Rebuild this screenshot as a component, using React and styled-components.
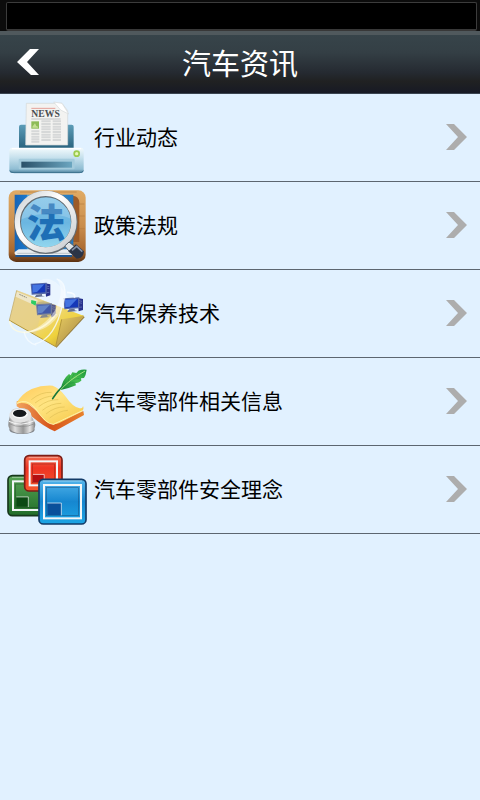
import React from "react";
import styled, { createGlobalStyle } from "styled-components";

const PrinterIcon = () => (
  <Icon viewBox="0 0 270 261" aria-hidden="true">
    <defs>
      <linearGradient id="tray" x1="0" y1="0" x2="0" y2="1">
        <stop offset="0" stopColor="#5d9db8" />
        <stop offset="1" stopColor="#28617c" />
      </linearGradient>
      <linearGradient id="printer" x1="0" y1="0" x2="0" y2="1">
        <stop offset="0" stopColor="#f4fbfd" />
        <stop offset="0.4" stopColor="#c5e0ec" />
        <stop offset="0.85" stopColor="#8fbdd3" />
        <stop offset="1" stopColor="#4d7f9a" />
      </linearGradient>
      <linearGradient id="slot" x1="0" y1="0" x2="1" y2="0">
        <stop offset="0" stopColor="#2a5068" />
        <stop offset="1" stopColor="#6ba6c0" />
      </linearGradient>
    </defs>
    <rect x="57" y="92" width="164" height="74" rx="6" fill="url(#tray)" />
    <path d="M79 28H186L203 50V153H77Z" fill="#f3f3f1" stroke="#d2d6d8" strokeWidth="2" />
    <path d="M161 24L186 28L206 60L182 48Z" fill="#fff" stroke="#d5d9da" strokeWidth="2" />
    <path d="M94 43H166" stroke="#e4a098" strokeWidth="3" />
    <text x="94" y="69" fontSize="29" fontWeight="bold" fontFamily="'Liberation Serif', serif" fill="#4a4e50">
      NEWS
    </text>
    <path d="M94 75H182" stroke="#a9adaf" strokeWidth="2" />
    <path
      d="M94 112H118M94 120H118M94 128H118M94 136H118M94 143H118M124 82H152M124 90H152M124 98H152M124 106H152M124 114H152M124 122H152M124 130H152M124 138H152M158 82H183M158 90H183M158 98H183M158 106H183M158 114H183M158 122H183M158 130H183M158 138H183"
      stroke="#d6d8d8"
      strokeWidth="6"
    />
    <rect x="94" y="82" width="23" height="22" fill="#8dbb58" />
    <path d="M97 98L105 88L109 96L114 98V101H97Z" fill="#c4df94" />
    <rect x="28" y="161" width="223" height="76" rx="9" fill="url(#printer)" />
    <path d="M36 164H243" stroke="#fff" strokeWidth="4" />
    <path d="M30 230Q32 236 42 236H238Q248 236 250 230" fill="none" stroke="#3e7390" strokeWidth="3" />
    <rect x="56" y="194" width="168" height="32" rx="4" fill="#a4cbdc" />
    <rect x="64" y="203" width="152" height="18" fill="url(#slot)" />
    <circle cx="230" cy="179" r="10" fill="#9ccc4e" />
    <circle cx="230" cy="179" r="5" fill="#e7f7b8" />
  </Icon>
);

const LawIcon = () => (
  <Icon viewBox="0 0 270 261" aria-hidden="true">
    <defs>
      <linearGradient id="wood" x1="0" y1="0" x2="0" y2="1">
        <stop offset="0" stopColor="#e0ab65" />
        <stop offset="0.5" stopColor="#c98d4c" />
        <stop offset="0.85" stopColor="#a8682f" />
        <stop offset="1" stopColor="#5b3213" />
      </linearGradient>
      <linearGradient id="book" x1="0" y1="0" x2="1" y2="0">
        <stop offset="0" stopColor="#1764b5" />
        <stop offset="0.2" stopColor="#1b78cb" />
        <stop offset="0.22" stopColor="#4aa5df" />
        <stop offset="1" stopColor="#2377bd" />
      </linearGradient>
      <linearGradient id="lens" x1="0" y1="0" x2="0" y2="1">
        <stop offset="0" stopColor="#7fc3e8" />
        <stop offset="0.5" stopColor="#6bb6e1" />
        <stop offset="1" stopColor="#96daf0" />
      </linearGradient>
      <linearGradient id="ring" x1="0" y1="0" x2="1" y2="1">
        <stop offset="0" stopColor="#c9ced1" />
        <stop offset="0.4" stopColor="#ffffff" />
        <stop offset="1" stopColor="#c5c9cc" />
      </linearGradient>
    </defs>
    <rect x="26" y="25" width="231" height="215" rx="22" fill="url(#wood)" />
    <path d="M232 66H253M232 102H254M232 140H254M232 174H254M60 30H230" stroke="#b57b3f" strokeWidth="2" />
    <path d="M210 42Q236 38 238 62V180H214Z" fill="#9c5b27" />
    <path d="M44 38H220V210H44Z" fill="url(#book)" />
    <path d="M44 210L56 202H218V220H48Q42 218 44 210Z" fill="#e8edf0" />
    <path d="M46 222H216" stroke="#1d5794" strokeWidth="6" />
    <path d="M52 214H214" stroke="#a3adb5" strokeWidth="2" />
    <circle cx="138" cy="122" r="82" fill="url(#lens)" />
    <text
      x="80"
      y="164"
      fontSize="116"
      fontWeight="900"
      fontFamily="'Noto Sans CJK SC', sans-serif"
      fill="#1e6fb6"
    >
      法
    </text>
    <path d="M60 114A79 79 0 0 1 216 112Q138 78 60 114Z" fill="#fff" opacity="0.18" />
    <circle cx="138" cy="121" r="85" fill="none" stroke="#646c72" strokeWidth="20" />
    <circle cx="137" cy="119" r="85" fill="none" stroke="url(#ring)" strokeWidth="16" />
    <path d="M194 192L207 180L228 197L212 213Z" fill="#dfe4e6" stroke="#555f67" strokeWidth="3" />
    <path d="M205 208L228 187L252 208Q250 230 230 230Z" fill="#2b3446" />
    <path d="M216 205L230 193L247 209" fill="none" stroke="#8691a4" strokeWidth="5" />
  </Icon>
);

const Computer = ({ x, y }) => (
  <g transform={`translate(${x} ${y})`}>
    <path d="M43 2L59 5V38L46 42Z" fill="#28328c" />
    <path d="M47 10L56 12M47 16L56 18M47 30L56 29" stroke="#7180c6" strokeWidth="2" />
    <path d="M0 3L48 0V33L3 36Z" fill="#5367a8" />
    <path d="M4 6L44 4V29L6 32Z" fill="#1538b8" />
    <path d="M5 7L41 5L19 28L6 30Z" fill="#4474e0" />
    <path d="M17 36L34 34V39L43 41L12 44Z" fill="#657193" />
  </g>
);

const MailIcon = () => (
  <Icon viewBox="0 0 270 261" aria-hidden="true">
    <defs>
      <linearGradient id="envelope" x1="0" y1="0" x2="1" y2="1">
        <stop offset="0" stopColor="#ead79b" />
        <stop offset="0.45" stopColor="#efd780" />
        <stop offset="0.7" stopColor="#efd23c" />
        <stop offset="1" stopColor="#a78638" />
      </linearGradient>
      <linearGradient id="flap" x1="0" y1="0" x2="1" y2="1">
        <stop offset="0" stopColor="#e8cd62" />
        <stop offset="1" stopColor="#a08040" />
      </linearGradient>
    </defs>
    <ellipse cx="155" cy="125" rx="58" ry="101" transform="rotate(-14 155 125)" fill="#fff" opacity="0.3" />
    <path d="M169 234L254 142L248 136L165 223Z" fill="#9a8347" />
    <path d="M50 61L252 138L167 230L28 151Z" fill="url(#envelope)" />
    <path d="M50 61L133 92L107 194L28 151Z" fill="#e3cd8c" opacity="0.6" />
    <path d="M185 148L252 137L168 231Z" fill="url(#flap)" />
    <path d="M28 151L167 230L185 148" fill="none" stroke="#b4973b" strokeWidth="3" />
    <path d="M50 61L28 151" stroke="#bba66a" strokeWidth="2" />
    <path d="M51 65L113 90L109 108L47 80Z" fill="#eee6c8" />
    <path d="M58 73L80 83" stroke="#8b8c7c" strokeWidth="3" strokeDasharray="5 2" />
    <path d="M94 90L109 94L107 107L93 100Z" fill="#2dcc63" />
    <path d="M107 100Q143 83 164 113L157 139L119 133Z" fill="#9d9a78" opacity="0.5" />
    <Computer x={92} y={38} />
    <g opacity="0.75">
      <Computer x={108} y={100} />
    </g>
    <Computer x={190} y={82} />
    <path
      d="M170 26Q218 51 183 124Q151 185 78 189Q144 163 169 113Q195 57 170 26Z"
      fill="#fff"
      opacity="0.45"
    />
    <path d="M29 153Q34 188 78 187Q133 180 169 132" fill="none" stroke="#fffbe0" strokeWidth="5" opacity="0.8" />
    <path
      d="M170 27Q207 39 188 101Q166 207 105 222M72 185Q78 218 109 225"
      fill="none"
      stroke="#f6fbff"
      strokeWidth="4"
      opacity="0.8"
    />
    <path d="M201 67Q229 68 223 84" fill="none" stroke="#fff" strokeWidth="5" opacity="0.7" />
  </Icon>
);

const ScrollIcon = () => (
  <Icon viewBox="0 0 270 261" aria-hidden="true">
    <defs>
      <linearGradient id="paper" x1="0" y1="0" x2="1" y2="1">
        <stop offset="0" stopColor="#ffc95a" />
        <stop offset="0.45" stopColor="#ffe583" />
        <stop offset="1" stopColor="#f5c745" />
      </linearGradient>
      <linearGradient id="under" x1="0" y1="0" x2="1" y2="0">
        <stop offset="0" stopColor="#f2a45e" />
        <stop offset="0.5" stopColor="#d6541b" />
        <stop offset="1" stopColor="#e8812c" />
      </linearGradient>
      <linearGradient id="pot" x1="0" y1="0" x2="1" y2="0">
        <stop offset="0" stopColor="#8a8a8a" />
        <stop offset="0.25" stopColor="#dedede" />
        <stop offset="0.55" stopColor="#989898" />
        <stop offset="0.8" stopColor="#e4e4e4" />
        <stop offset="1" stopColor="#808080" />
      </linearGradient>
      <linearGradient id="feather" x1="0" y1="1" x2="1" y2="0">
        <stop offset="0" stopColor="#138235" />
        <stop offset="0.55" stopColor="#47bf50" />
        <stop offset="1" stopColor="#18933a" />
      </linearGradient>
    </defs>
    <path d="M50 130Q67 123 86 139L160 200L250 159L252 171L164 220Q132 207 91 172Q65 155 50 145Z" fill="url(#under)" />
    <path
      d="M49 137Q62 109 95 93Q126 81 158 83Q180 91 198 117Q218 147 239 151Q249 151 249 143Q255 157 238 164L178 195Q150 206 130 184Q111 161 98 147Q77 130 49 137Z"
      fill="url(#paper)"
    />
    <path d="M51 136Q79 120 105 149Q139 200 160 199L247 158" fill="none" stroke="#fff0a6" strokeWidth="3" />
    <path
      d="M94 125Q123 101 155 103M105 135Q133 113 165 114M116 146Q144 124 175 125M127 157Q153 136 184 136M138 168Q164 146 194 147M149 180Q175 159 204 157"
      fill="none"
      stroke="#dfc056"
      strokeWidth="2"
    />
    <path d="M158 122Q175 96 191 83" fill="none" stroke="#16773a" strokeWidth="5" strokeLinecap="round" />
    <path
      d="M182 96Q186 65 207 48L212 52L217 43L229 45L235 38Q247 33 260 35Q258 51 252 60L243 61L244 68Q236 75 226 76L228 82Q208 91 182 96Z"
      fill="url(#feather)"
    />
    <path d="M181 96Q207 66 255 39" fill="none" stroke="#a5e080" strokeWidth="3" />
    <path d="M204 70L210 53M216 60L222 48M205 76L223 74M221 64L238 61" stroke="#0f7a31" strokeWidth="1" />
    <ellipse cx="66" cy="215" rx="38" ry="13" fill="#82858a" />
    <path d="M32 166Q34 149 61 150Q89 151 91 167L105 194Q108 203 101 216Q91 227 64 227Q29 223 26 207Q22 199 32 166Z" fill="url(#pot)" />
    <path d="M27 190Q62 208 103 188" fill="none" stroke="#f4f4f4" strokeWidth="3" />
    <path d="M27 197Q64 215 105 197" fill="none" stroke="#8a8a8a" strokeWidth="2" />
    <ellipse cx="61" cy="172" rx="33" ry="22" fill="#e3e3e3" />
    <ellipse cx="60" cy="167" rx="24" ry="15" fill="#f8f8f8" />
    <ellipse cx="59" cy="166" rx="20" ry="11" fill="#16181b" />
  </Icon>
);

const Tile = ({ x, y, width, height, fill, edge, corner }) => (
  <g transform={`translate(${x} ${y})`}>
    <rect x="2" y="2" width={width - 4} height={height - 4} rx="13" fill={`url(#${fill})`} stroke={edge} strokeWidth="5" />
    <path d={`M14 7H${width - 14}`} stroke="#fff" strokeWidth="3" opacity="0.4" />
    <rect x="17" y="19" width={width - 34} height={height - 38} fill="none" stroke="#f3f7f8" strokeWidth="6" />
    <rect x="25" y="27" width={width - 50} height={height - 54} fill="none" stroke={edge} strokeWidth="2" opacity="0.6" />
    <rect x="27" y={height * 0.53} width={width * 0.29} height={height * 0.47 - 29} fill={corner} />
    <path
      d={`M27 ${height * 0.53}H${27 + width * 0.29}V${height - 28}`}
      fill="none"
      stroke="#fff"
      strokeWidth="3"
      opacity="0.65"
    />
  </g>
);

const TilesIcon = () => (
  <Icon viewBox="0 0 270 261" aria-hidden="true">
    <defs>
      <linearGradient id="green" x1="0" y1="0" x2="0" y2="1">
        <stop offset="0" stopColor="#57a455" />
        <stop offset="1" stopColor="#226d29" />
      </linearGradient>
      <linearGradient id="red" x1="0" y1="0" x2="0" y2="1">
        <stop offset="0" stopColor="#f26b4f" />
        <stop offset="0.35" stopColor="#ef3423" />
        <stop offset="1" stopColor="#f5572c" />
      </linearGradient>
      <linearGradient id="blue" x1="0" y1="0" x2="0" y2="1">
        <stop offset="0" stopColor="#54b5eb" />
        <stop offset="0.5" stopColor="#1687d0" />
        <stop offset="1" stopColor="#1da5e4" />
      </linearGradient>
    </defs>
    <Tile x={22} y={87} width={124} height={124} fill="green" edge="#17381c" corner="#0b4a13" />
    <Tile x={72} y={27} width={116} height={110} fill="red" edge="#7c1d16" corner="#b40f12" />
    <Tile x={115} y={98} width={145} height={138} fill="blue" edge="#123b68" corner="#09509b" />
  </Icon>
);

const categories = [
  { name: "行业动态", icon: PrinterIcon },
  { name: "政策法规", icon: LawIcon },
  { name: "汽车保养技术", icon: MailIcon },
  { name: "汽车零部件相关信息", icon: ScrollIcon },
  { name: "汽车零部件安全理念", icon: TilesIcon },
];

const App = () => {
  return (
    <Page>
      <GlobalStyle />
      <StatusBar>
        <StatusFrame />
      </StatusBar>
      <Header>
        <BackButton type="button" aria-label="返回">
          <svg width="22" height="26" viewBox="0 0 22 26" aria-hidden="true">
            <path d="M0 13L13 0H22L10 13L22 26H14Z" fill="#fff" />
          </svg>
        </BackButton>
        <Title>汽车资讯</Title>
      </Header>
      <main>
        <List>
          {categories.map(({ name, icon: CategoryIcon }) => (
            <li key={name}>
              <Row href="#">
                <CategoryIcon />
                <Name>{name}</Name>
                <Chevron width="22" height="26" viewBox="0 0 22 26" aria-hidden="true">
                  <path d="M0 0H8L21 13L8 26H0L12 13Z" fill="#adadad" />
                </Chevron>
              </Row>
            </li>
          ))}
        </List>
      </main>
    </Page>
  );
};

const GlobalStyle = createGlobalStyle`
  * {
    box-sizing: border-box;
  }
  body {
    margin: 0;
    background: #e1f1ff;
    font-family: "Noto Sans CJK SC", sans-serif;
  }
`;

const Page = styled.div`
  min-height: 100vh;
  background: #e1f1ff;
`;

const StatusBar = styled.div`
  height: 31px;
  padding: 2px 3px 0 6px;
  background: #0c0c0c;
`;

const StatusFrame = styled.div`
  height: 29px;
  border: 1px solid #3c3c3c;
  border-bottom: 2px solid #383838;
  border-radius: 2px;
  background: #000;
`;

const Header = styled.header`
  display: grid;
  grid-template-columns: 60px 1fr 60px;
  align-items: center;
  height: 63px;
  padding-bottom: 4px;
  border-top: 4px solid #50595d;
  border-bottom: 1px solid #3a4450;
  background: linear-gradient(#37444a, #343f45 30%, #252a31 65%, #202122 80%, #171a25);
`;

const BackButton = styled.button`
  display: flex;
  align-items: center;
  height: 54px;
  padding: 0 0 0 17px;
  border: 0;
  background: none;
  cursor: pointer;
`;

const Title = styled.h1`
  margin: 0;
  color: #fff;
  font-size: 29px;
  font-weight: 400;
  line-height: 54px;
  text-align: center;
`;

const List = styled.ul`
  margin: 0;
  padding: 0;
  list-style: none;
`;

const Row = styled.a`
  display: flex;
  align-items: center;
  height: 88px;
  padding-right: 12px;
  border-bottom: 1px solid #5c6670;
  color: #000;
  text-decoration: none;
`;

const Icon = styled.svg`
  flex: none;
  width: 90px;
  height: 87px;
`;

const Name = styled.span`
  flex: 1;
  padding: 0 0 4px 4px;
  font-size: 21px;
  line-height: 32px;
`;

const Chevron = styled.svg`
  flex: none;
  margin-bottom: 2px;
`;

export default App;
